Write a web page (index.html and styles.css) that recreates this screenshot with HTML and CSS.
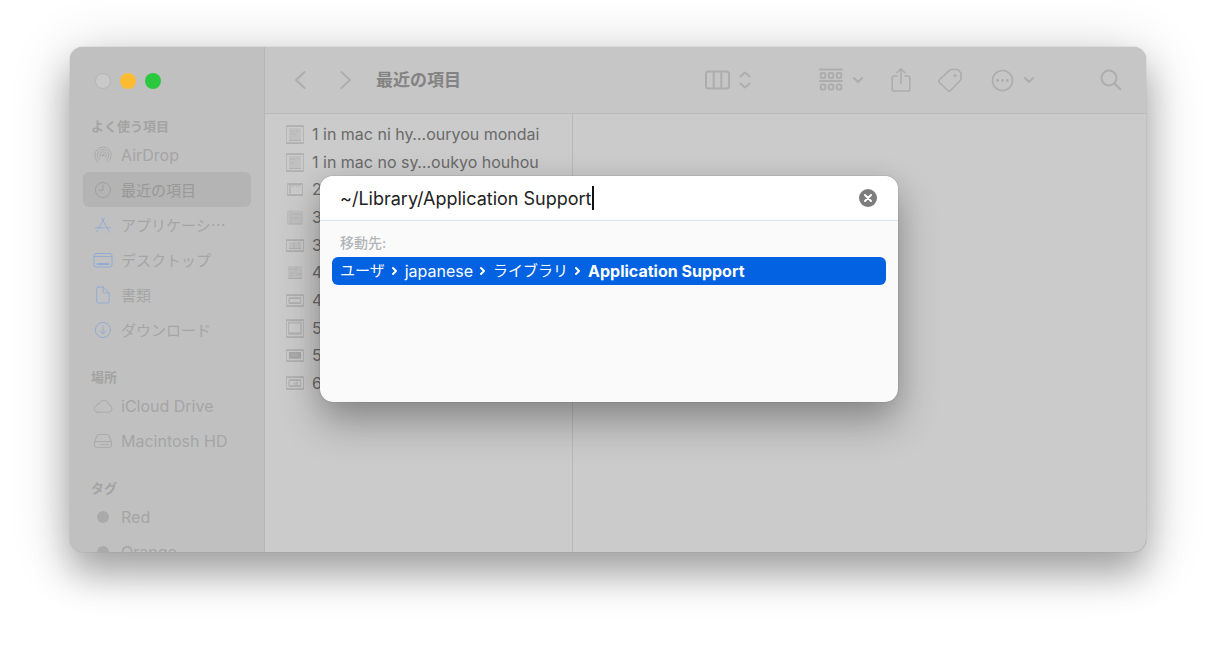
FILE: index.html
```html
<!DOCTYPE html>
<html lang="ja">
<head>
<meta charset="utf-8">
<title>最近の項目</title>
<link rel="stylesheet" href="styles.css">
</head>
<body>
<main class="window">
  <aside class="sidebar">
    <div class="lights">
      <button class="light light-close" aria-label="閉じる"></button>
      <button class="light light-min" aria-label="しまう"></button>
      <button class="light light-zoom" aria-label="拡大"></button>
    </div>
    <nav class="nav">
      <section class="group">
        <h2 class="group-title">よく使う項目</h2>
        <a class="item" href="#"><svg class="icon" viewBox="0 0 20 20"><path d="M5.4 17A8.2 8.2 0 1 1 14.6 17M6.3 14.5A5.7 5.7 0 1 1 13.7 14.5M7.6 12.3A3.3 3.3 0 1 1 12.4 12.3"/><circle class="dot" cx="10" cy="10.2" r="1.4"/></svg>AirDrop</a>
        <a class="item item-jp item-active" href="#" aria-current="page"><svg class="icon" viewBox="0 0 20 20"><circle cx="10" cy="10" r="7.6"/><path d="M10 5v5.2H6"/></svg>最近の項目</a>
        <a class="item item-jp" href="#"><svg class="icon icon-blue" viewBox="0 0 20 20"><path d="M11.4 3 5.3 14M8.6 3l6.8 12.5 1.2 1.8M2.3 12.8h9.2M14 12.8h3.7M4.3 15.6l-1 1.7"/></svg>アプリケーシ…</a>
        <a class="item item-jp" href="#"><svg class="icon icon-blue" viewBox="0 0 20 20"><rect x="1" y="3.5" width="18" height="13.5" rx="2"/><path d="M1 6.5h18"/><path d="M4.5 14h11" stroke-width="2"/></svg>デスクトップ</a>
        <a class="item item-jp" href="#"><svg class="icon icon-blue" viewBox="0 0 20 20"><path d="M5.2 2h5l6 6v8.5a1.5 1.5 0 0 1-1.5 1.5H5.2a1.5 1.5 0 0 1-1.5-1.5v-13A1.5 1.5 0 0 1 5.2 2zM10.2 2v4.5A1.5 1.5 0 0 0 11.7 8h4.5"/></svg>書類</a>
        <a class="item item-jp" href="#"><svg class="icon icon-blue" viewBox="0 0 20 20"><circle cx="10" cy="10" r="7.6"/><path d="M10 6v7.6M7 10.8l3 3 3-3"/></svg>ダウンロード</a>
      </section>
      <section class="group">
        <h2 class="group-title">場所</h2>
        <a class="item" href="#"><svg class="icon" viewBox="0 0 20 20"><path d="M4.4 16.2h11.3a3.6 3.6 0 0 0 .5-7.1A5.3 5.3 0 0 0 6.1 7.6 2.9 2.9 0 0 0 3.3 10a3.2 3.2 0 0 0 1.1 6.2z"/></svg>iCloud Drive</a>
        <a class="item" href="#"><svg class="icon" viewBox="0 0 20 20"><path d="M5.8 3.5h8.4q1.2 0 1.7 1.1l2.6 6.2v3.6a2 2 0 0 1-2 2h-13a2 2 0 0 1-2-2v-3.6l2.6-6.2q.5-1.1 1.7-1.1zM1.8 10.6h16.4M8 13.5h1M10.5 13.5h1M13 13.5h2"/></svg>Macintosh HD</a>
      </section>
      <section class="group">
        <h2 class="group-title">タグ</h2>
        <a class="item" href="#"><svg class="icon" viewBox="0 0 20 20"><circle class="dot" cx="10" cy="10" r="6"/></svg>Red</a>
        <a class="item" href="#"><svg class="icon" viewBox="0 0 20 20"><circle class="dot" cx="10" cy="10" r="6"/></svg>Orange</a>
      </section>
    </nav>
  </aside>
  <section class="content">
    <header class="toolbar">
      <div class="history">
        <button class="tool" aria-label="戻る"><svg width="12" height="20" viewBox="0 0 12 20"><path d="M10.500 2 2 10l8.500 8"/></svg></button>
        <button class="tool" aria-label="進む"><svg width="12" height="20" viewBox="0 0 12 20"><path d="M1.500 2 10 10l-8.500 8"/></svg></button>
      </div>
      <h1 class="title">最近の項目</h1>
      <div class="tools">
        <button class="tool view" aria-label="表示"><svg width="25" height="20" viewBox="0 0 25 20"><rect x="1" y="1.500" width="23" height="17" rx="2.500"/><path d="M8.700 1.500v17M16.300 1.500v17"/></svg><svg width="12" height="18" viewBox="0 0 12 18"><path d="m1.500 5.500 4.500-4 4.500 4M1.500 12.500l4.500 4 4.500-4"/></svg></button>
        <button class="tool arrange" aria-label="グループ"><svg width="24" height="24" viewBox="0 0 24 24"><path d="M1 1.500h22M1 13h22"/><rect x="1.800" y="5" width="4.500" height="5" rx="1"/><rect x="9.800" y="5" width="4.500" height="5" rx="1"/><rect x="17.800" y="5" width="4.500" height="5" rx="1"/><rect x="1.800" y="16.500" width="4.500" height="5" rx="1"/><rect x="9.800" y="16.500" width="4.500" height="5" rx="1"/><rect x="17.800" y="16.500" width="4.500" height="5" rx="1"/></svg><svg width="12" height="10" viewBox="0 0 12 10"><path d="m2 3 4 4 4-4"/></svg></button>
        <button class="tool share" aria-label="共有"><svg width="20" height="26" viewBox="0 0 20 26"><path d="M6 9H3a1.800 1.800 0 0 0-1.800 1.800v11.400A1.800 1.800 0 0 0 3 24h14a1.800 1.800 0 0 0 1.800-1.800V10.800A1.800 1.800 0 0 0 17 9h-3M10 16.500V2M6 5.700 10 1.800l4 3.900"/></svg></button>
        <button class="tool tag" aria-label="タグ"><svg width="26" height="26" viewBox="0 0 26 26"><path d="M14.500 2.500h5a3 3 0 0 1 2.100.9l1.500 1.600a3 3 0 0 1 .9 2.100v4.300a3 3 0 0 1-.9 2.100l-9.600 10a2 2 0 0 1-2.800 0L2.500 15.500a2 2 0 0 1 0-2.800l9.900-9.300a3 3 0 0 1 2.100-.9z"/><circle cx="18" cy="8.500" r=".8"/></svg></button>
        <button class="tool more" aria-label="その他"><svg width="23" height="23" viewBox="0 0 23 23"><circle cx="11.500" cy="11.500" r="10"/><circle class="dot" cx="6.700" cy="11.500" r="1.400"/><circle class="dot" cx="11.500" cy="11.500" r="1.400"/><circle class="dot" cx="16.300" cy="11.500" r="1.400"/></svg><svg width="12" height="10" viewBox="0 0 12 10"><path d="m2 3 4 4 4-4"/></svg></button>
        <button class="tool" aria-label="検索"><svg width="22" height="22" viewBox="0 0 22 22"><circle cx="9" cy="9" r="7.500"/><path d="m14.500 14.500 5.700 5.700" stroke-width="2.200"/></svg></button>
      </div>
    </header>
    <div class="columns">
      <ul class="files">
        <li class="file"><svg class="thumb" viewBox="0 0 20 20"><rect x="1.500" y="1.500" width="17" height="17"/><path class="fill" d="M4 4h12v12H4z"/><path d="M6 7h3M7 10h3M12 6v2"/></svg>1 in mac ni hy…ouryou mondai</li>
        <li class="file"><svg class="thumb" viewBox="0 0 20 20"><rect x="1.500" y="1.500" width="17" height="17"/><path class="fill" d="M4 4h12v12H4z"/><path d="M5 7h5M6 11h3M12 6h2"/></svg>1 in mac no sy…oukyo houhou</li>
        <li class="file"><svg class="thumb" viewBox="0 0 20 20"><rect x="2.500" y="4.500" width="15" height="11"/><path d="M5 5v10M7 6h2M11 6h1M14 6h1"/></svg>2</li>
        <li class="file"><svg class="thumb" viewBox="0 0 20 20"><rect class="fill" x="2.500" y="3.500" width="15" height="13"/><path d="M6 4v12M8 7h7M8 11h5"/></svg>3</li>
        <li class="file"><svg class="thumb" viewBox="0 0 20 20"><rect x="1.500" y="4.500" width="17" height="11"/><rect class="fill" x="4" y="7" width="12" height="6"/><path d="M9 7v6M14 7v6"/></svg>3</li>
        <li class="file"><svg class="thumb" viewBox="0 0 20 20"><path class="fill" d="M3 4h14v12H3z"/><path d="M4 7h5M11 5v4M5 11h4M12 12h4M4 14h3"/></svg>4</li>
        <li class="file"><svg class="thumb" viewBox="0 0 20 20"><rect x="1.500" y="4.500" width="17" height="11"/><rect x="4.500" y="7.500" width="11" height="5"/></svg>4</li>
        <li class="file"><svg class="thumb" viewBox="0 0 20 20"><rect x="1.500" y="1.500" width="17" height="17"/><rect x="4" y="4" width="12" height="11"/><path d="M4 15h12"/></svg>5</li>
        <li class="file"><svg class="thumb" viewBox="0 0 20 20"><rect x="1.500" y="4.500" width="17" height="11"/><rect class="fill dark" x="4" y="7" width="12" height="6"/><path d="M7 10h6"/></svg>5</li>
        <li class="file"><svg class="thumb" viewBox="0 0 20 20"><rect x="1.500" y="3.500" width="17" height="12"/><rect x="4.500" y="6.500" width="11" height="6"/><path d="M9 10h2M12 8v3"/></svg>6</li>
      </ul>
      <div class="preview"></div>
    </div>
  </section>
  <form class="dialog" role="dialog" aria-label="フォルダへ移動">
    <div class="field">
      <input class="path" type="text" aria-label="フォルダのパス" value="~/Library/Application Support">
      <span class="caret"></span>
      <button class="clear" type="button" aria-label="消去"><svg width="18" height="18" viewBox="0 0 18 18"><circle cx="9" cy="9" r="9"/><path d="m6 6 6 6M12 6l-6 6"/></svg></button>
    </div>
    <div class="results">
      <h2 class="results-title">移動先:</h2>
      <a class="result" href="#"><span class="kana">ユーザ</span><svg class="sep" viewBox="0 0 6 10"><path d="m1 2 3 3-3 3"/></svg><span>japanese</span><svg class="sep" viewBox="0 0 6 10"><path d="m1 2 3 3-3 3"/></svg><span class="kana">ライブラリ</span><svg class="sep" viewBox="0 0 6 10"><path d="m1 2 3 3-3 3"/></svg><strong>Application Support</strong></a>
    </div>
  </form>
</main>
</body>
</html>
```

FILE: styles.css
```css
* { box-sizing: border-box; }

body {
  display: flex;
  height: 100vh;
  margin: 0;
  padding: 47px 70px 93px;
  background: #fff;
  font: 16px/20px Inter, "Noto Sans CJK JP", sans-serif;
}

h1, h2, ul { margin: 0; padding: 0; }
ul { list-style: none; }
a { color: inherit; text-decoration: none; }
button { padding: 0; border: 0; background: none; color: inherit; font: inherit; }
svg { flex: none; fill: none; stroke: currentColor; stroke-linecap: round; stroke-linejoin: round; }

.window {
  position: relative;
  display: flex;
  flex: 1;
  border-radius: 13px;
  background: #cbcbcb;
  box-shadow: 0 0 1px #777, 0 22px 36px rgba(0, 0, 0, .27), 0 8px 60px rgba(0, 0, 0, .2);
}

.sidebar {
  flex: none;
  width: 195px;
  padding: 0 13px;
  overflow: hidden;
  border-right: 1px solid #b6b6b6;
  border-radius: 13px 0 0 13px;
  background: #c0c0c0;
  color: #a5a5a5;
}

.lights { display: flex; gap: 9px; padding: 26px 12px 0; }
.light { width: 16px; height: 16px; border-radius: 50%; }
.light-close { border: 1px solid #b5b5b5; background: #c9c9c9; }
.light-min { background: #fdbb32; }
.light-zoom { background: #2bc840; }

.nav { display: flex; flex-direction: column; gap: 19px; padding-top: 26px; }
.group-title { padding-left: 8px; color: #a3a3a3; font-size: 13px; font-weight: 700; line-height: 22px; }
.item { display: flex; align-items: center; gap: 8px; height: 35px; padding: 0 10px; border-radius: 6px; white-space: nowrap; font-size: 16px; }
.item-jp { font-family: "Noto Sans CJK JP", sans-serif; font-size: 15px; }
.item-active { background: #b4b4b4; color: #989898; }
.icon { width: 20px; height: 20px; color: #aaa; }
.item-active .icon { color: #9f9f9f; }
.icon-blue { color: #93abd2; }
.dot { fill: currentColor; stroke: none; }

.content { display: flex; flex: 1; flex-direction: column; min-width: 0; }

.toolbar {
  display: flex;
  flex: none;
  align-items: center;
  height: 67px;
  padding: 0 24px 0 29px;
  border-bottom: 1px solid #bababa;
  border-radius: 0 13px 0 0;
  background: #c6c6c6;
  color: #adadad;
}
.history { display: flex; gap: 34px; }
.title { margin-left: 24px; color: #838383; font-size: 17px; font-weight: 700; line-height: 24px; }
.tools { display: flex; align-items: center; margin-left: auto; }
.tool { display: flex; align-items: center; gap: 9px; }
.tool svg { stroke-width: 2; }
.view { margin-right: 68px; }
.arrange { margin-right: 27px; }
.share { margin-right: 26px; }
.tag { margin-right: 28px; }
.more { margin-right: 65px; }
.tool .dot { stroke: none; }
.share svg, .tag svg, .more svg:first-child { stroke-width: 1.600; }

.columns { display: flex; flex: 1; }
.files {
  display: grid;
  grid-template-rows: repeat(10, 1fr);
  width: 307px;
  height: 290px;
  padding: 6px 0 7px 20px;
  color: #6a6a6a;
}
.columns .preview { flex: 1; height: 100%; border-left: 1px solid #b8b8b8; }
.file { display: flex; align-items: center; gap: 7px; white-space: nowrap; }
.thumb { width: 20px; height: 20px; color: #b4b4b4; filter: drop-shadow(0 1px 0 #b0b0b0); }
.thumb .fill { fill: #c0c0c0; stroke: none; }
.thumb .dark { fill: #a8a8a8; }

.dialog {
  position: absolute;
  top: 129px;
  left: 50%;
  width: 578px;
  min-height: 226px;
  margin-left: -288px;
  overflow: hidden;
  border-radius: 13px;
  background: #fafafa;
  box-shadow: 0 0 1px #555, 0 20px 40px rgba(0, 0, 0, .3), 0 4px 24px rgba(0, 0, 0, .08);
}
.field { display: flex; align-items: center; height: 45px; padding: 0 21px 0 20px; border-bottom: 1px solid #d9e1ee; background: #fff; }
.path { field-sizing: content; padding: 1px 0 0; border: 0; outline: 0; background: none; color: #222; font: 18px/24px Inter, sans-serif; }
.caret { width: 2px; height: 24px; background: #111; }
.clear { margin-left: auto; }
.clear svg { display: block; }
.clear circle { fill: #7d7d7d; stroke: none; }
.clear path { stroke: #fff; stroke-width: 2; }

.results { padding: 11px 12px; }
.results-title { padding-left: 8px; color: #b3b5b8; font-size: 14px; font-weight: 500; line-height: 22px; }
.result { display: flex; align-items: center; gap: 7px; height: 28px; margin-top: 3px; padding: 0 8px; border-radius: 6px; background: #0262e2; color: #fff; font-size: 16px; white-space: nowrap; }
.kana { font-size: 15px; }
.result strong { font-weight: 700; }
.sep { width: 6px; height: 10px; stroke-width: 2; }
```
